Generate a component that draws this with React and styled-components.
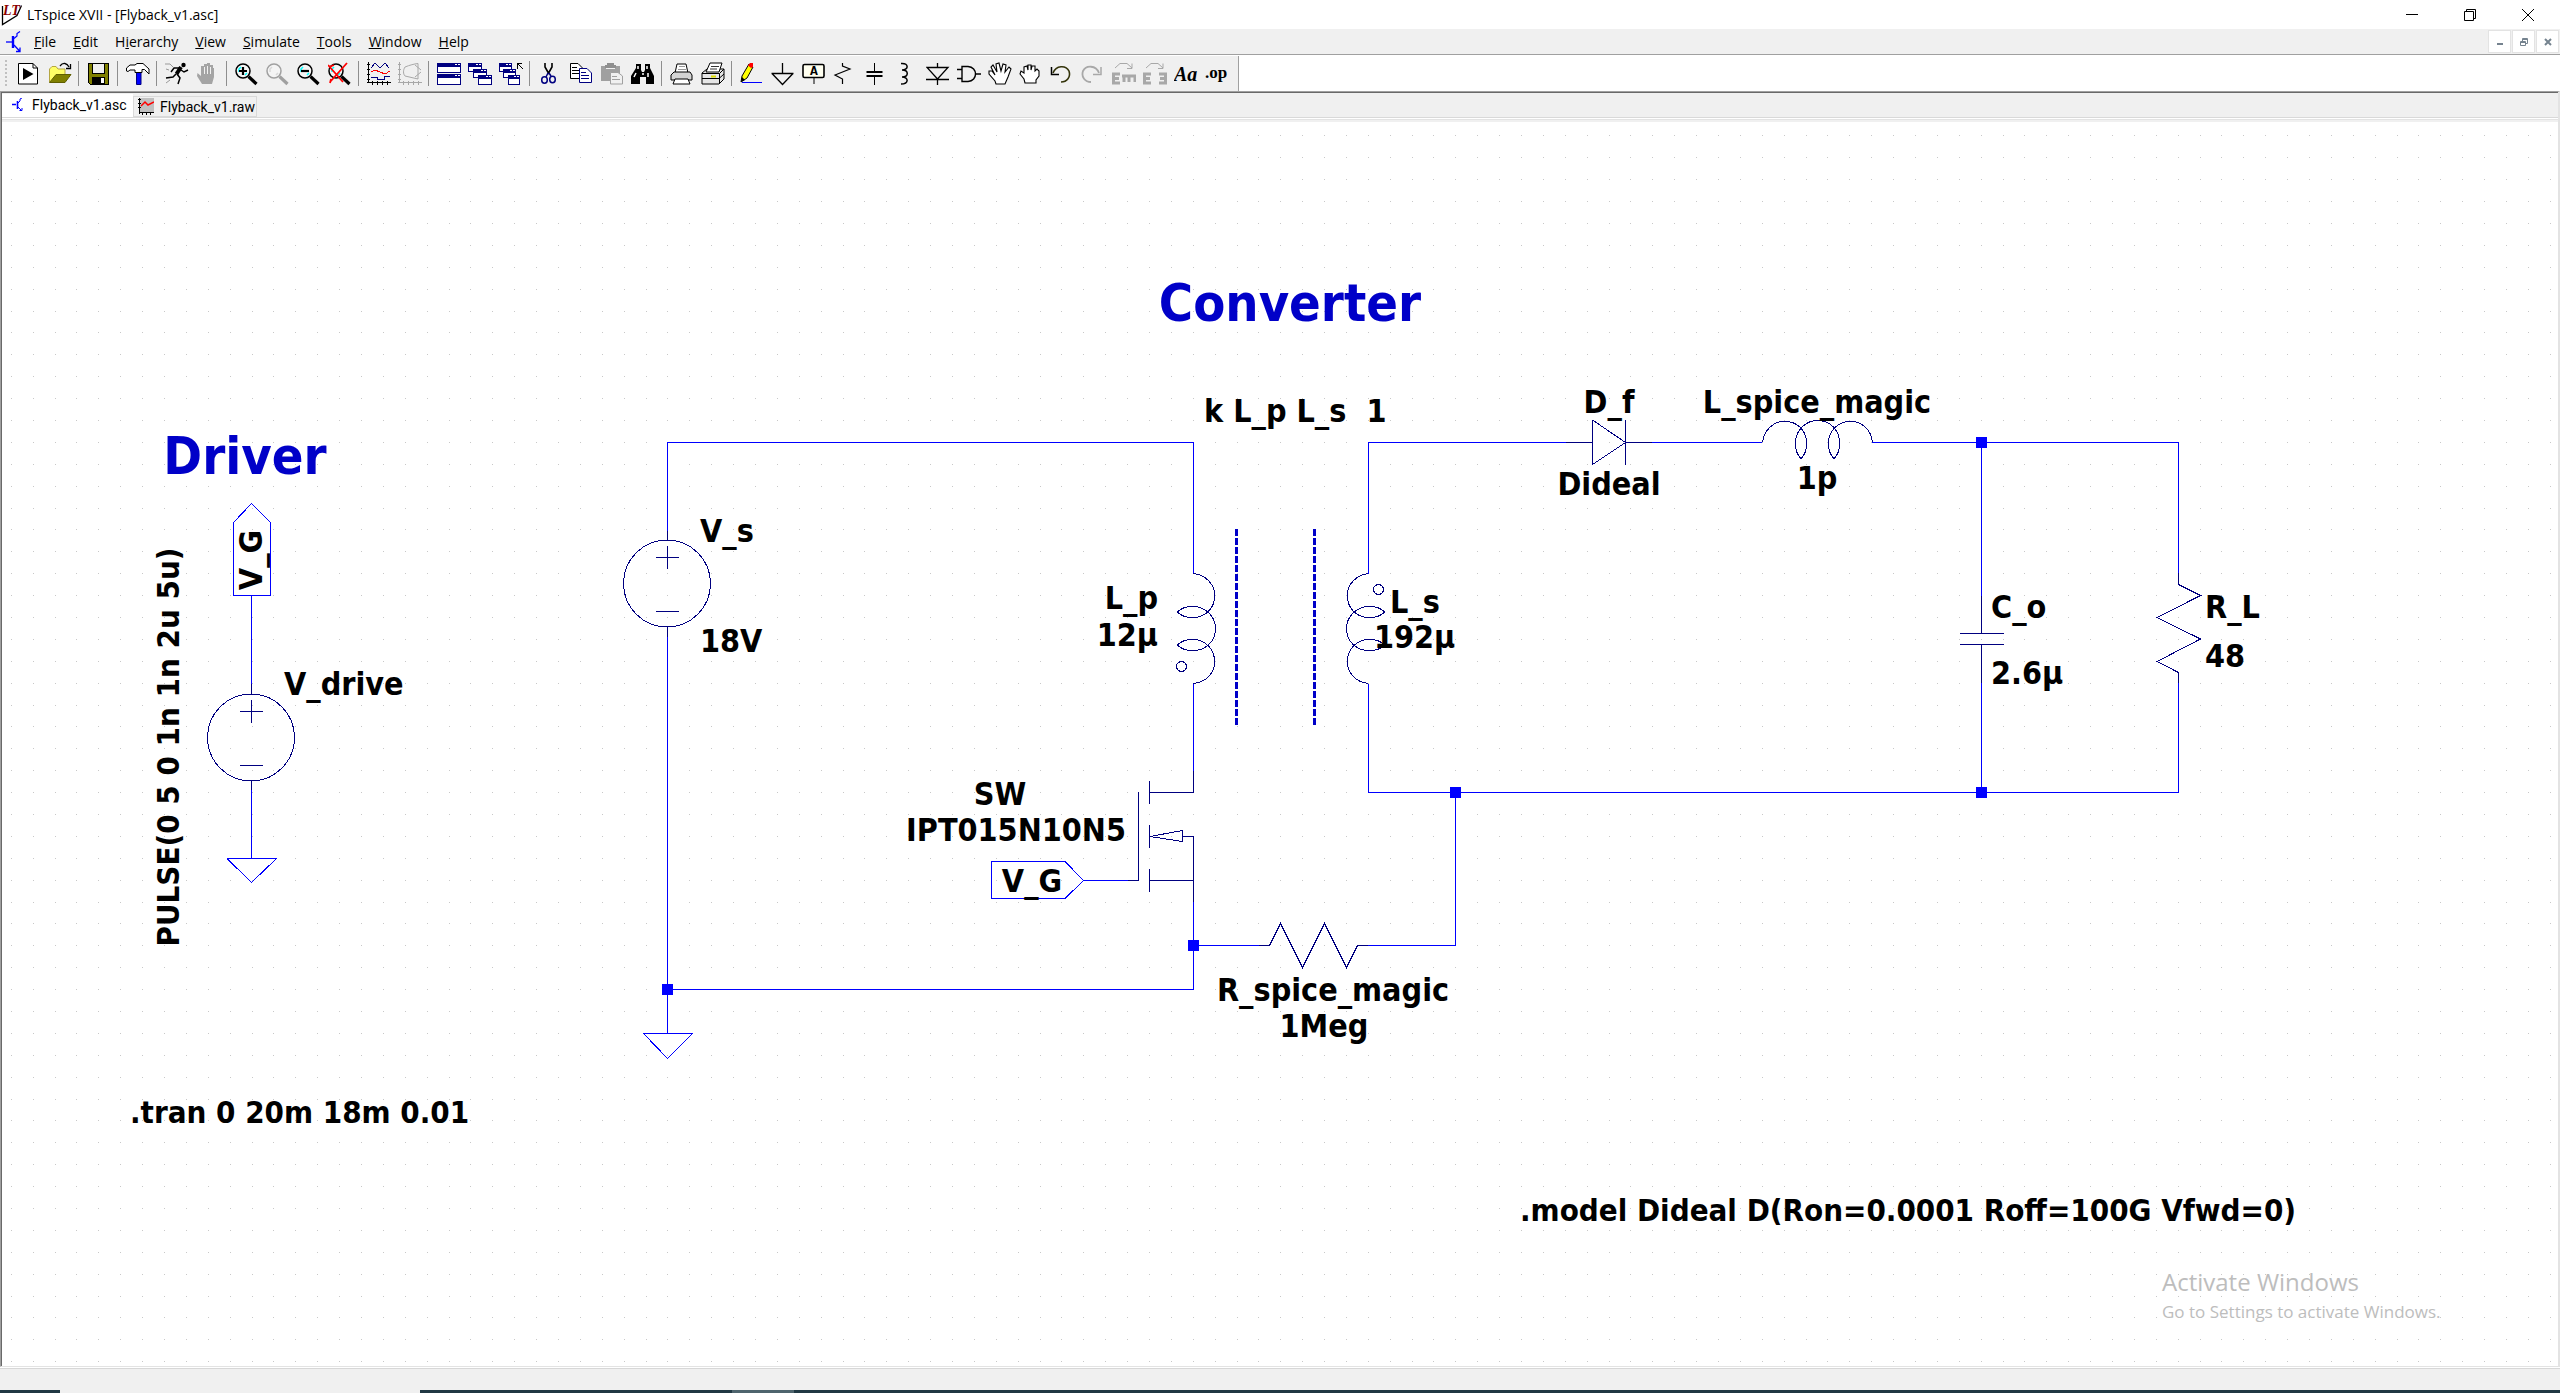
import React from "react";
import styled, { createGlobalStyle } from "styled-components";

const uiFont = `"Open Sans", "Noto Sans", sans-serif`;
const schematicFont = `"DejaVu Sans Condensed", "DejaVu Sans", sans-serif`;

const GlobalStyle = createGlobalStyle`
  * { box-sizing: border-box; }
  body { margin: 0; background: #ffffff; }
  button { font: inherit; color: inherit; border: 0; padding: 0; background: transparent; }
`;

const Window = styled.div`
  display: flex;
  flex-direction: column;
  height: 100vh;
  overflow: hidden;
  font-family: ${uiFont};
  font-size: 14px;
  color: #000000;
`;

const TitleBar = styled.header`
  display: flex;
  align-items: center;
  height: 29px;
  flex: none;
  background: #ffffff;
  padding-right: 3px;
`;

const Title = styled.h1`
  flex: 1;
  margin: 0;
  padding-left: 3px;
  font-size: 14px;
  line-height: 28px;
  font-weight: 400;
  white-space: pre;
`;

const CaptionButton = styled.button`
  display: grid;
  place-items: center;
  width: 58px;
  height: 28px;
`;

const MenuBar = styled.nav`
  display: flex;
  align-items: center;
  height: 26px;
  flex: none;
  background: #f0f0f0;
  border-bottom: 1px solid #a0a0a0;
`;

const MenuItem = styled.button`
  padding: 0 9px 0 8px;
  line-height: 24px;
`;

const MenuSpacer = styled.div`
  flex: 1;
`;

const DocIcon = styled.div`
  display: flex;
  width: 26px;
  padding-left: 5px;
`;

const MdiButton = styled.button`
  display: grid;
  place-items: center;
  width: 23px;
  height: 23px;
  margin-right: 1px;
  background: #ffffff;
  border: 1px solid #e3e3e3;
`;

const ToolRow = styled.div`
  display: flex;
  height: 36px;
  flex: none;
  background: #ffffff;
  padding-top: 1px;
`;

const ToolBar = styled.div`
  display: flex;
  align-items: center;
  background: #f0f0f0;
  border-right: 1px solid #a0a0a0;
  padding-right: 6px;
`;

const Grip = styled.div`
  width: 2px;
  height: 28px;
  margin: 0 6px 0 5px;
  background: repeating-linear-gradient(#c0c0c0 0 2px, transparent 2px 4px);
`;

const ToolGroup = styled.div`
  display: flex;
  align-items: center;
  & + &::before {
    content: "";
    width: 1px;
    height: 25px;
    margin: 0 4px 0 3px;
    background: #8e8e8e;
  }
`;

const ToolButton = styled.button`
  display: flex;
  width: 31px;
  padding-left: 4px;
`;

const Client = styled.main`
  display: flex;
  flex-direction: column;
  flex: 1;
  min-height: 0;
  border-style: solid;
  border-width: 1px 2px 1px 1px;
  border-color: #a0a0a0 #e3e3e3 #e3e3e3 #a0a0a0;
`;

const ClientInner = styled.div`
  display: flex;
  flex-direction: column;
  flex: 1;
  min-height: 0;
  border-top: 1px solid #696969;
  border-left: 1px solid #696969;
`;

const Tabs = styled.div`
  display: flex;
  align-items: flex-end;
  height: 29px;
  flex: none;
  padding-bottom: 5px;
  background: linear-gradient(#f0f0f0 24px, #d9d9d9 24px 25px, #ffffff 25px 26px, #e3e3e3 26px 27px, #f0f0f0 27px);
`;

const Tab = styled.button`
  display: flex;
  align-items: center;
  gap: ${(p) => (p.$active ? 9 : 6)}px;
  height: ${(p) => (p.$active ? 23 : 21)}px;
  width: ${(p) => (p.$active ? 131 : 124)}px;
  padding-left: ${(p) => (p.$active ? 10 : 4)}px;
  padding-bottom: ${(p) => (p.$active ? 1 : 0)}px;
  background: ${(p) => (p.$active ? "#ffffff" : "#f0f0f0")};
  border: ${(p) => (p.$active ? 0 : 1)}px solid #d9d9d9;
  font-family: Roboto, sans-serif;
  font-size: 14px;
  white-space: nowrap;
`;

const Canvas = styled.section`
  flex: 1;
  min-height: 0;
  overflow: hidden;
  background: #ffffff;
`;

const StatusBar = styled.footer`
  height: 23px;
  flex: none;
  background: #f0f0f0;
  border-top: 1px solid #ffffff;
  box-shadow: inset 0 1px #d7d7d7;
`;

const TaskStrip = styled.div`
  display: flex;
  height: 3px;
  flex: none;
  background: #203843;
`;

const TaskItem = styled.div`
  width: ${(p) => p.$width}px;
  margin-left: ${(p) => p.$gap}px;
  background: ${(p) => p.$color};
`;

const Wire = styled.path`
  fill: none;
  stroke: #0000ff;
  stroke-width: 1;
  shape-rendering: crispEdges;
`;

const Part = styled.path`
  fill: none;
  stroke: #000080;
  stroke-width: 1;
  shape-rendering: crispEdges;
`;

const Core = styled.path`
  fill: none;
  stroke: #0000c8;
  stroke-width: 3;
  stroke-dasharray: 7 2;
`;

const Grid = styled.path`
  stroke: #c8c8c8;
  stroke-width: 1;
  shape-rendering: crispEdges;
`;

const Label = styled.text`
  font-family: ${schematicFont};
  font-weight: 700;
  font-size: 32px;
  fill: #000000;
  white-space: pre;
`;

const Heading = styled(Label)`
  font-size: 52px;
  fill: #0000c8;
`;

const Directive = styled(Label)`
  font-size: 31px;
`;

const Notice = styled.text`
  font-family: ${uiFont};
  font-size: ${(p) => p.$size}px;
  fill: #bdbdbd;
`;

const IconText = styled.text`
  font-family: ${(p) => p.$family || '"Liberation Serif", serif'};
  font-size: ${(p) => p.$size}px;
  font-weight: 700;
  font-style: ${(p) => (p.$italic ? "italic" : "normal")};
`;

const DocMark = () => (
  <svg width="18" height="22" viewBox="0 0 18 22" stroke="#0000ff" fill="none">
    <path d="M1 11H7" strokeWidth="1.300" />
    <path d="M8 5V17" strokeWidth="2.400" />
    <path d="M9 7.500L12 5V2.500L15 .5" strokeWidth="1.200" />
    <path d="M9 14L15 20.500M11 20.500H15V16.500" strokeWidth="1.300" />
  </svg>
);

const Lens = ({ color = "#000000", shine = "#00ffff" }) => (
  <g fill="none">
    <circle cx="8" cy="9" r="7" stroke={color} strokeWidth="1.500" fill="#f4f4f4" />
    <path d="M4 10 V7 L6 5 M10 13 L12 11" stroke={shine} strokeWidth="1.500" />
    <path d="M13.500 14.500 L21.500 22" stroke={color} strokeWidth="3.200" />
  </g>
);

const Pane = ({ x, y, w, h }) => (
  <g>
    <rect x={x + 0.5} y={y + 0.5} width={w - 1} height={h - 1} fill="#ffffff" stroke="#000080" />
    <rect x={x} y={y} width={w} height="4" fill="#000080" />
    <path d={`M${x + w - 6} ${y + 1.5}H${x + w - 4}M${x + w - 3} ${y + 1.5}H${x + w - 1}`} stroke="#ffffff" />
  </g>
);

const icons = {
  Run: (
    <g>
      <path d="M1.500 1.500H16L20.500 6V22H1.500Z" fill="#fff" stroke="#000" />
      <path d="M16 1.500V6H20.500" fill="none" stroke="#000" />
      <path d="M6 6V18L16.500 12Z" />
    </g>
  ),
  Open: (
    <g>
      <path d="M1.500 20V7L4 4.500H8L10 7H17V12" fill="#ffff66" stroke="#b5a642" />
      <path d="M1.500 20.500 L8 12.500H23L17 20.500Z" fill="#808000" stroke="#5f5f00" />
      <path d="M12 4 C15 0 19 1 21 5 M22.500 2V6.500H18" fill="none" stroke="#000" strokeWidth="1.300" />
    </g>
  ),
  Save: (
    <g shapeRendering="crispEdges">
      <path d="M1 1H21V22H3L1 20Z" fill="#808000" stroke="#000" />
      <rect x="5" y="1" width="12" height="10" fill="#f0f0f0" stroke="#000" />
      <rect x="5" y="15" width="13" height="7" />
      <rect x="14" y="16" width="3" height="5" fill="#fff" />
    </g>
  ),
  "Control panel": (
    <g>
      <path d="M10.500 9H15V22.500H10.500Z" fill="#0000ff" stroke="#000080" />
      <path d="M.5 9V6L4 3H9L11 1.500H17L23 7V12L18.500 7.500H16V10.500H9V8H4L2 9.500Z" fill="#fff" stroke="#000" />
    </g>
  ),
  Simulate: (
    <g fill="none" stroke="#000">
      <circle cx="18.500" cy="3" r="2.200" fill="#000" stroke="none" />
      <path d="M16 5 L11.500 12" strokeWidth="4" />
      <path d="M14 6H9 L6 10 M16 8 L19 10 L23 8 M11 12 L8 15 L1 16 M12 12 L15 16 L13 22" strokeWidth="1.500" />
      <path d="M0 2 H5 L8 5 M1 7 L4 8 M1 21 L5 18" stroke="#999" />
    </g>
  ),
  Halt: (
    <g>
      <path d="M6 22L1 14L1.500 11L5 14V4H8V2H11V1H14V3H17V6H18V15L16 22Z" fill="#a4a4a4" />
      <path d="M8.500 5V12M11.500 4V12M14.500 5V12" stroke="#f0f0f0" />
    </g>
  ),
  "Zoom in": (
    <g>
      <Lens />
      <path d="M4 9H12M8 5V13" stroke="#000" strokeWidth="2.200" />
    </g>
  ),
  Pan: <Lens color="#a0a0a0" shine="#d8d8d8" />,
  "Zoom out": (
    <g>
      <Lens />
      <path d="M4 9H12" stroke="#000" strokeWidth="2.200" />
    </g>
  ),
  "Zoom to fit": (
    <g>
      <Lens />
      <path d="M0 3 L15 20 M19 1 L2 20 M1 5 L6 3 M3 17 L2 21" stroke="#ff0000" strokeWidth="1.800" />
    </g>
  ),
  Autorange: (
    <g fill="none" shapeRendering="crispEdges">
      <path d="M1.500 0V20M0 2.500H3M0 7.500H3M0 12.500H3M0 17.500H3M0 20.500H24M5.500 19V23M10.500 19V23M15.500 19V23M20.500 19V23" stroke="#000" />
      <path d="M4 6 L8 1 L13 6 L18 1 L22 6 M4 15H10V17H17V14H23" stroke="#000080" />
      <path d="M4 10 L8 8 L13 10 L18 12 L23 9" stroke="#ff0000" />
    </g>
  ),
  Markers: (
    <g fill="none" stroke="#a8a8a8">
      <path d="M1.500 0V20M0 2.500H3M0 7.500H3M0 12.500H3M0 17.500H3M0 20.500H24M5.500 19V23M10.500 19V23M15.500 19V23M20.500 19V23" />
      <path d="M7 5 C12 3 16 2 20 1.500V17 L7 14 C5 12 5 8 7 5 M17 3 L23 8 M17 15 L23 10" />
    </g>
  ),
  "Tile windows": (
    <g shapeRendering="crispEdges">
      <Pane x={0} y={1} w={24} h={10} />
      <Pane x={0} y={12} w={24} h={11} />
    </g>
  ),
  "Cascade windows": (
    <g shapeRendering="crispEdges">
      <Pane x={0} y={1} w={14} h={9} />
      <Pane x={5} y={7} w={14} h={9} />
      <Pane x={10} y={13} w={14} h={10} />
    </g>
  ),
  "Arrange icons": (
    <g shapeRendering="crispEdges">
      <Pane x={0} y={1} w={13} h={9} />
      <Pane x={4} y={7} w={13} h={9} />
      <Pane x={9} y={13} w={12} h={10} />
      <path d="M18 6.500V1.500H23 M18 1 L24 7" fill="none" stroke="#000" />
    </g>
  ),
  Cut: (
    <g fill="none">
      <path d="M7 1V5L11 12M14 1V5L10 12" stroke="#000" strokeWidth="1.600" />
      <path d="M10 11 L8 15M11 11 L13 14" stroke="#000080" strokeWidth="1.500" />
      <ellipse cx="6.500" cy="18" rx="2.800" ry="3.200" stroke="#000080" strokeWidth="1.500" />
      <ellipse cx="14.500" cy="17.500" rx="2.800" ry="3.200" stroke="#000080" strokeWidth="1.500" />
    </g>
  ),
  Copy: (
    <g fill="#fff">
      <path d="M1.500 1.500H9L13.500 6V16.500H1.500Z" stroke="#000" />
      <path d="M3 5.500H8M3 8.500H10M3 11.500H10" stroke="#000" />
      <path d="M10.500 6.500H18L22.500 11V20.500H10.500Z" stroke="#000080" />
      <path d="M12 10.500H17M12 13.500H20M12 16.500H20" stroke="#000080" />
    </g>
  ),
  Paste: (
    <g>
      <path d="M1 4H20V19H1Z" fill="#a0a0a0" />
      <path d="M7 1H14V3H16V6H5V3H7Z" fill="#8f8f8f" />
      <path d="M6 6.500H15" stroke="#f0f0f0" />
      <path d="M10.500 10.500H18L22.500 14V22H10.500Z" fill="#f0f0f0" stroke="#a0a0a0" />
      <path d="M12 14.500H17M12 17.500H20" stroke="#a0a0a0" />
    </g>
  ),
  Find: (
    <g>
      <path d="M5 2H10V8L11 10H13L14 8V2H19V6L23 14V22H15V15H9V22H0V14L5 6Z" />
      <path d="M7 4V7M16 4V7M5 11L3 15M12 11V13M17 11V15" stroke="#fff" strokeWidth="1.500" />
    </g>
  ),
  "Print preview": (
    <g fill="#fff" stroke="#000">
      <path d="M5 11 L7 2H16L18 11" />
      <path d="M9 4.500H15M8 7.500H16" stroke="#999" />
      <path d="M1 13L4 10H20L22 13V18H1Z" fill="#d4d4d4" />
      <path d="M5 17H18L20 22H3Z" />
    </g>
  ),
  Print: (
    <g fill="#fff" stroke="#000">
      <path d="M1 11L6 7H23V17L18 22H1Z" fill="#e6e6e6" />
      <path d="M5 10L9 1H21L18 10Z" />
      <path d="M10 4.500H18M9 7H16" stroke="#333" />
      <path d="M1 11.500H18.500V22M18.500 11.500L23 7M1 16.500H18L23 12" fill="none" />
      <path d="M10 14.500H15" stroke="#dddd00" strokeWidth="2" />
    </g>
  ),
  "Draw wire": (
    <g>
      <path d="M1 20 L2 14 L9 2 L13 5 L7 16Z" fill="#ffff00" stroke="#000" />
      <path d="M8 3.500 L10 1H13V5L11 6Z" fill="#ff0000" />
      <path d="M1 20 L2 15 L5 18Z" fill="#000" />
      <path d="M2 20.500H22" stroke="#0000ff" />
    </g>
  ),
  Ground: <path d="M11.500 1V11M.5 11.500H22.500M1 11.500 L11.500 22.500 L22 11.500" fill="none" stroke="#000" strokeWidth="1.300" />,
  "Label net": (
    <g>
      <rect x="1" y="2.500" width="21" height="13" rx="1.500" fill="#fffff0" stroke="#000" strokeWidth="1.600" />
      <path d="M12 16V22" stroke="#000" />
      <IconText $size={13} $family='"Liberation Mono", monospace' x="8" y="13">A</IconText>
    </g>
  ),
  Resistor: <path d="M9.500 1V4L17 7L2 13L9.500 17V22" fill="none" stroke="#000" strokeWidth="1.200" />,
  Capacitor: (
    <g stroke="#000">
      <path d="M10.500 1V9M10.500 15V23" />
      <path d="M2.500 10H18.500M2.500 14H18.500" strokeWidth="2" />
    </g>
  ),
  Inductor: <path d="M6 1.500C14 1 14 8 7 8C14 8 14 15 7 15C14 15 14 22 6 22" fill="none" stroke="#000" strokeWidth="1.500" />,
  Diode: <path d="M11.500 1V5M1 5.500H22L11.500 17Z M0 17.500H23M11.500 17V23" fill="none" stroke="#000" strokeWidth="1.300" />,
  Component: (
    <g fill="none" stroke="#000" strokeWidth="1.400">
      <path d="M5 4.500H11C21 5 21 19 11 19.500H5Z" />
      <path d="M0 7.500H5M0 16.500H5M18 12H24" />
    </g>
  ),
  Move: (
    <path d="M8 22 L7 19 L1 12V9H4L7 13L3 5L5 3L9 10L8 2L11 1L13 9L15 2L18 3L17 10L21 5L23 7L20 15L17 22Z" fill="#fff" stroke="#000" strokeWidth="1.100" />
  ),
  Drag: (
    <path d="M6 21 L5 17L1 12L2 9L5 11V5L8 4L9 8V3L12 3V8L13 4H16V9L18 7L20 9V14L17 18V21Z" fill="#fff" stroke="#000" strokeWidth="1.100" />
  ),
  Undo: (
    <g fill="none" stroke="#000">
      <path d="M3 11C6 3 16 3 19 9C21 15 17 20 11 20" strokeWidth="1.600" stroke="#33330a" />
      <path d="M1.500 5V12.500H9" strokeWidth="1.500" />
    </g>
  ),
  Redo: (
    <g fill="none" stroke="#a8a8a8">
      <path d="M18 11C15 3 5 3 2 9C0 15 4 20 10 20" strokeWidth="1.800" />
      <path d="M20 5V12.500H12" strokeWidth="1.500" />
    </g>
  ),
  Mirror: (
    <g stroke="#a8a8a8" fill="none">
      <path d="M8 12H1.500V21H8M1 16.500H7" strokeWidth="3" />
      <path d="M10 14H23V20M17 14V20M12 14V20" strokeWidth="3" />
      <path d="M3 6L8 1.500H15L20 6M20 1.500V6.500H15" />
    </g>
  ),
  Rotate: (
    <g stroke="#a8a8a8" fill="none">
      <path d="M8 12H1.500V21H8M1 16.500H7" strokeWidth="3" />
      <path d="M16 12H22.500V21H16M23 16.500H17" strokeWidth="3" />
      <path d="M3 6L8 1.500H15L20 6M20 1.500V6.500H15" />
    </g>
  ),
  Text: <IconText $size={20} $italic x="0" y="19">Aa</IconText>,
  "SPICE directive": <IconText $size={17} x="0" y="16">.op</IconText>,
};

const toolGroups = [
  ["Run", "Open"],
  ["Save"],
  ["Control panel"],
  ["Simulate", "Halt"],
  ["Zoom in", "Pan", "Zoom out", "Zoom to fit"],
  ["Autorange", "Markers"],
  ["Tile windows", "Cascade windows", "Arrange icons"],
  ["Cut", "Copy", "Paste", "Find"],
  ["Print preview", "Print"],
  ["Draw wire", "Ground", "Label net", "Resistor", "Capacitor", "Inductor", "Diode", "Component", "Move", "Drag", "Undo", "Redo", "Mirror", "Rotate", "Text", "SPICE directive"],
];

const menus = [
  ["", "F", "ile"],
  ["", "E", "dit"],
  ["H", "i", "erarchy"],
  ["", "V", "iew"],
  ["", "S", "imulate"],
  ["", "T", "ools"],
  ["", "W", "indow"],
  ["", "H", "elp"],
];

const GRID_STEP = 21.888;
let gridPath = "";
for (let row = -6; row < 51; row += 1) {
  for (let col = -6; col < 111; col += 1) {
    const x = Math.floor(142.6 + col * GRID_STEP);
    const y = Math.floor(267.3 + row * GRID_STEP);
    gridPath += `M${x} ${y}.5h1`;
  }
}

const coil =
  "M1193.500 573.500C1207 575 1215 586 1214.700 595C1214.700 610 1204 617.500 1193 617.500C1187 617.500 1181 616 1177.500 612" +
  "C1181 608 1187 606.500 1193 606.500C1206 606.500 1215.500 617 1215.500 628.500C1215.500 641 1206 650.500 1193 650.500C1187 650.500 1181 649 1177.500 645" +
  "C1181 641 1187 639.500 1193 639.500C1206 639.500 1214.700 650 1214.700 662C1214.700 672 1207 682 1193.500 683.500";

const Source = ({ x, y, r }) => (
  <g>
    <Part as="circle" cx={x} cy={y} r={r} fill="none" stroke="#000080" shapeRendering="crispEdges" />
    <Part d={`M${x - 11} ${y - 26}h23M${x + 0.5} ${y - 37.5}v23M${x - 11} ${y + 28}h23`} />
  </g>
);

const Node = ({ x, y }) => <rect x={x - 5} y={y - 5} width="11" height="11" fill="#0000ff" />;

const Schematic = () => (
  <svg width="2556" height="1244" viewBox="2 122 2556 1244" role="img" aria-label="Flyback converter schematic">
    <Grid d={gridPath} />

    <Wire d="M233.500 595.500V522.500L251.500 503.500L270.500 522.500V595.500Z" />
    <Wire d="M251.500 595.500V684M251.500 790V858.500M227 858.500H276.500L251.500 882.500L227 858.500" />
    <Part d="M251.500 684V694M251.500 780V790" />
    <Source x={251} y={737.5} r={43.5} />

    <Wire d="M667.500 531V442.500H1193.500V573.500M667.500 637V1033M667.500 989.500H1193.500V902M643.500 1033.500H692.500L667.500 1058.500L643.500 1033.500" />
    <Part d="M667.500 531V540M667.500 627V637" />
    <Source x={667} y={583.5} r={43.5} />
    <Part d={coil} />
    <Part as="circle" cx="1181.500" cy="666.500" r="5" />
    <Wire d="M1193.500 683.500V771" />
    <Part d="M1193.500 771V792.500H1149.500M1149.500 781V804M1149.500 825V848M1149.500 869V892M1138.500 792V880.500H1128M1149.500 880.500H1193.500M1182.500 836.500H1193.500V902M1150 836.500L1182.500 830.500V841.500Z" />
    <Wire d="M991.500 861.500H1065L1083.500 880.500L1065 898.500H991.500ZM1083.500 880.500H1128" />
    <Wire d="M1193.500 945.500H1259M1368 945.500H1455.500V792.500" />
    <Part d="M1259 945.500H1269.500L1280.500 923.500L1302.500 967.500L1324.500 923.500L1346.500 967.500L1357.500 945.500H1368" />

    <Core d="M1236.500 529V725M1314.500 529V725" />

    <Wire d="M1368.500 573.500V442.500H1566M1652 442.500H1762M1872 442.500H2178.500V573M1368.500 683.500V792.500H2178.500V683M1981.500 442.500V596M1981.500 683V792.500" />
    <Part d={coil} transform="matrix(-1 0 0 1 2562 0)" />
    <Part as="circle" cx="1378.500" cy="589.500" r="5" />
    <Part d="M1566 442.500H1592.500M1592.500 420V464.500L1625.500 442.500L1592.500 420M1625.500 420V464.500M1625.500 442.500H1652" />
    <Part d={coil} transform="matrix(0 -1 1 0 1189 1636)" />
    <Part d="M1981.500 596V633.500M1959.500 633.500H2004M1959.500 644.500H2004M1981.500 644.500V683" />
    <Part d="M2178.500 573V584.500L2200.500 595.500L2157 617.500L2200.500 639L2157 661.500L2178.500 672.500V683" />

    <Node x={667} y={989} />
    <Node x={1193} y={945} />
    <Node x={1455} y={792} />
    <Node x={1981} y={442} />
    <Node x={1981} y={792} />

    <Heading x="1290" y="321" textAnchor="middle">Converter</Heading>
    <Heading x="245" y="474" textAnchor="middle">Driver</Heading>
    <Label x="1204" y="422">{"k L_p L_s\u00a0 1"}</Label>
    <Label transform="translate(262 560) rotate(-90)" textAnchor="middle">V_G</Label>
    <Directive transform="translate(179 747) rotate(-90)" textAnchor="middle">PULSE(0 5 0 1n 1n 2u 5u)</Directive>
    <Label x="284" y="695">V_drive</Label>
    <Label x="700" y="542">V_s</Label>
    <Label x="700" y="652">18V</Label>
    <Label x="1158" y="609" textAnchor="end">L_p</Label>
    <Label x="1158" y="646" textAnchor="end">12µ</Label>
    <Label x="1390" y="613">L_s</Label>
    <Label x="1374" y="648">192µ</Label>
    <Label x="1000" y="805" textAnchor="middle">SW</Label>
    <Label x="1016" y="841" textAnchor="middle">IPT015N10N5</Label>
    <Label x="1032" y="892" textAnchor="middle">V_G</Label>
    <Label x="1333" y="1001" textAnchor="middle">R_spice_magic</Label>
    <Label x="1324" y="1037" textAnchor="middle">1Meg</Label>
    <Label x="1609" y="413" textAnchor="middle">D_f</Label>
    <Label x="1609" y="495" textAnchor="middle">Dideal</Label>
    <Label x="1817" y="413" textAnchor="middle">L_spice_magic</Label>
    <Label x="1817" y="489" textAnchor="middle">1p</Label>
    <Label x="1991" y="618">C_o</Label>
    <Label x="1991" y="684">2.6µ</Label>
    <Label x="2205" y="618">R_L</Label>
    <Label x="2205" y="667">48</Label>
    <Directive x="130" y="1123">.tran 0 20m 18m 0.01</Directive>
    <Directive x="1520" y="1221">.model Dideal D(Ron=0.0001 Roff=100G Vfwd=0)</Directive>
    <Notice $size={24} x="2162" y="1291">Activate Windows</Notice>
    <Notice $size={17} x="2162" y="1318">Go to Settings to activate Windows.</Notice>
  </svg>
);

export default function App() {
  return (
    <Window>
      <GlobalStyle />
      <TitleBar>
        <svg width="24" height="28" viewBox="0 0 24 28">
          <path d="M2.500 5V23.500L17 14.500L21.500 4.500" fill="#fff" stroke="#000" strokeWidth="1.300" />
          <IconText $size={14} $italic x="3" y="14" fill="#8b0000">LT</IconText>
        </svg>
        <Title>LTspice XVII - [Flyback_v1.asc]</Title>
        <CaptionButton aria-label="Minimize">
          <svg width="12" height="12"><path d="M0 5.500H12" stroke="#000" /></svg>
        </CaptionButton>
        <CaptionButton aria-label="Restore">
          <svg width="12" height="12" fill="none" stroke="#000"><path d="M.5 2.500H9.500V11.500H.5ZM2.500 2V.5H11.500V9.500H10" /></svg>
        </CaptionButton>
        <CaptionButton aria-label="Close">
          <svg width="12" height="12" stroke="#000"><path d="M0 0L12 12M12 0L0 12" /></svg>
        </CaptionButton>
      </TitleBar>

      <MenuBar>
        <DocIcon><DocMark /></DocIcon>
        {menus.map(([before, key, after]) => (
          <MenuItem key={key + after}>{before}<u>{key}</u>{after}</MenuItem>
        ))}
        <MenuSpacer />
        <MdiButton aria-label="Minimize document">
          <svg width="8" height="8"><path d="M1 6H7" stroke="#75838f" strokeWidth="2" /></svg>
        </MdiButton>
        <MdiButton aria-label="Restore document">
          <svg width="8" height="8" fill="none" stroke="#75838f"><path d="M.5 3.500H5.500V7.500H.5ZM.5 4.500H5M2.500 3V.5H7.500V5.500H6M2.500 1.500H7" /></svg>
        </MdiButton>
        <MdiButton aria-label="Close document">
          <svg width="8" height="8"><path d="M1 1L7 7M7 1L1 7" stroke="#75838f" strokeWidth="2" /></svg>
        </MdiButton>
      </MenuBar>

      <ToolRow>
        <ToolBar role="toolbar">
          <Grip />
          {toolGroups.map((group) => (
            <ToolGroup key={group[0]}>
              {group.map((name) => (
                <ToolButton key={name} aria-label={name}>
                  <svg width="24" height="24" viewBox="0 0 24 24">{icons[name]}</svg>
                </ToolButton>
              ))}
            </ToolGroup>
          ))}
        </ToolBar>
      </ToolRow>

      <Client>
        <ClientInner>
          <Tabs role="tablist">
            <Tab $active role="tab" aria-selected="true">
              <svg width="11" height="14" viewBox="0 0 11 14" fill="none" stroke="#0000ff">
                <path d="M0 6.500H4M5.500 3V11" strokeWidth="1.600" />
                <path d="M6 5L8 3V1L10 0M6 9L10 13M7.500 12.500H10V10" />
              </svg>
              Flyback_v1.asc
            </Tab>
            <Tab role="tab" aria-selected="false">
              <svg width="16" height="17" viewBox="0 0 16 17">
                <rect x="2" width="14" height="14" fill="#c0c0c0" />
                <path d="M1.500 0V16M0 1.500H3M0 5.500H3M0 9.500H3M1 14.500H16M4.500 14V17M8.500 14V17M12.500 14V17" stroke="#000" />
                <path d="M3 8L7 4L10 7L16 4" fill="none" stroke="#ff0000" strokeWidth="1.500" />
              </svg>
              Flyback_v1.raw
            </Tab>
          </Tabs>
          <Canvas>
            <Schematic />
          </Canvas>
        </ClientInner>
      </Client>
      <StatusBar />
      <TaskStrip>
        <TaskItem $gap={60} $width={360} $color="#f0f0f0" />
        <TaskItem $gap={312} $width={62} $color="#4e646d" />
      </TaskStrip>
    </Window>
  );
}
